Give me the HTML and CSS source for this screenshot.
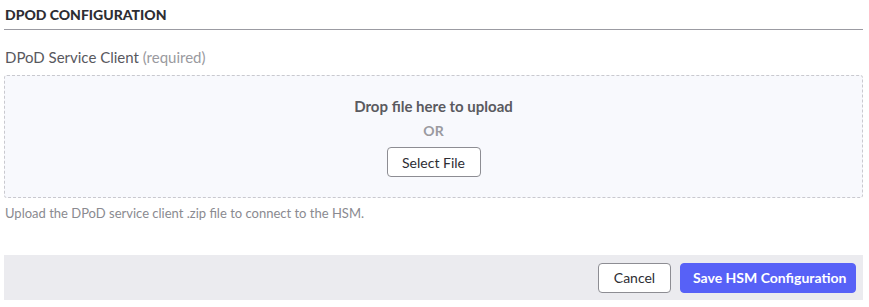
FILE: index.html
```html
<!DOCTYPE html>
<html lang="en">
<head>
    <meta charset="utf-8" />
    <title>DPoD Configuration</title>
    <link rel="stylesheet" href="styles.css">
</head>
<body>
    <div class="config">
        <h2 class="section-title">DPOD CONFIGURATION</h2>

        <div class="field">
            <label class="field-label">DPoD Service Client <span class="hint">(required)</span></label>
            <div class="dropzone">
                <div class="drop-text">Drop file here to upload</div>
                <div class="drop-or">OR</div>
                <button class="btn btn-default">Select File</button>
            </div>
            <div class="help-text">Upload the DPoD service client .zip file to connect to the HSM.</div>
        </div>

        <div class="footer">
            <button class="btn btn-default">Cancel</button>
            <button class="btn btn-primary">Save HSM Configuration</button>
        </div>
    </div>
</body>
</html>
```
FILE: styles.css
```css
body {
    margin: 0;
    padding: 0 6px 0 4px;
    font-family: Lato, "Open Sans", sans-serif;
    background-color: #fff;
    color: #4a4a4f;
}

.section-title {
    margin: 0;
    padding: 6px 1px 0;
    height: 23px;
    font-size: 14px;
    font-weight: 900;
    color: #2d2d33;
    border-bottom: 1px solid #9b9ba2;
}

.field {
    margin-top: 18px;
}

.field-label {
    display: block;
    font-size: 15px;
    color: #58585e;
    padding-left: 1px;
    margin-bottom: 9px;
}

.hint {
    color: #9a9aa0;
}

.dropzone {
    height: 123px;
    box-sizing: border-box;
    border: 1px dashed #c9c9cf;
    border-radius: 3px;
    background-color: #f8f9fd;
    display: flex;
    flex-direction: column;
    align-items: center;
    padding-top: 21px;
}

.drop-text {
    font-size: 15px;
    font-weight: bold;
    color: #5a5a60;
}

.drop-or {
    margin-top: 7px;
    font-size: 14px;
    font-weight: bold;
    color: #9a9aa0;
}

.btn {
    box-sizing: border-box;
    font-family: Lato, "Open Sans", sans-serif;
    font-size: 14px;
    height: 30px;
    padding: 0 12px;
    border-radius: 4px;
    white-space: nowrap;
    cursor: pointer;
}

.dropzone .btn {
    margin-top: 8px;
    width: 94px;
}

.btn-default {
    background-color: #fff;
    border: 1px solid #8d8d93;
    color: #2d2d33;
}

.btn-primary {
    background-color: #5761f7;
    border: 1px solid #5761f7;
    color: #fff;
    font-weight: bold;
}

.help-text {
    margin-top: 7px;
    font-size: 13px;
    color: #8a8a90;
    padding-left: 1px;
}

.footer {
    margin-top: 34px;
    height: 45px;
    background-color: #ebebef;
    display: flex;
    justify-content: flex-end;
    align-items: center;
    gap: 9px;
    padding-right: 7px;
}

.footer .btn-default {
    width: 73px;
}

.footer .btn-primary {
    width: 176px;
}
```
